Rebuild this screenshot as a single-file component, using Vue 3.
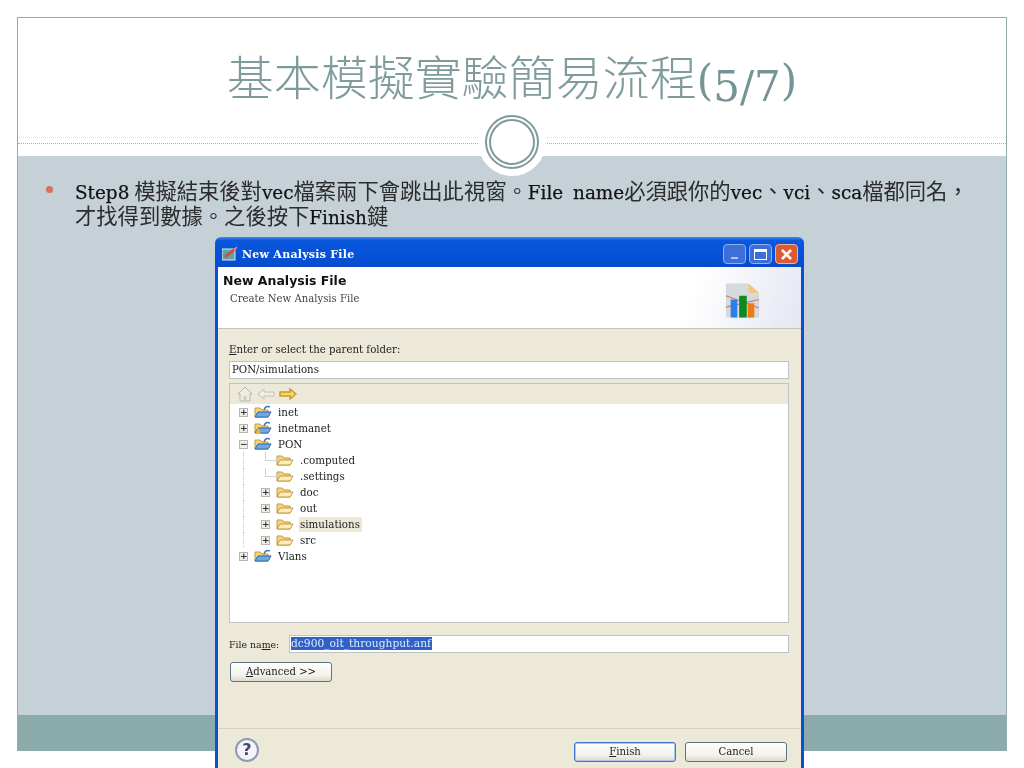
<script setup>
const rows = [
  { label: "inet", depth: 0, toggle: "+", icon: "project" },
  { label: "inetmanet", depth: 0, toggle: "+", icon: "project", warn: true },
  { label: "PON", depth: 0, toggle: "-", icon: "project" },
  { label: ".computed", depth: 1, toggle: "", icon: "folder" },
  { label: ".settings", depth: 1, toggle: "", icon: "folder" },
  { label: "doc", depth: 1, toggle: "+", icon: "folder" },
  { label: "out", depth: 1, toggle: "+", icon: "folder" },
  { label: "simulations", depth: 1, toggle: "+", icon: "folder", selected: true },
  { label: "src", depth: 1, toggle: "+", icon: "folder" },
  { label: "Vlans", depth: 0, toggle: "+", icon: "project" },
];
</script>

<template>
  <div class="page">
    <div class="slide">
      <header class="head">
        <h1 class="title">基本模擬實驗簡易流程<span class="nums">(<span class="digits">5/7</span>)</span></h1>
      </header>
      <div class="rule"></div>
      <div class="halo"><div class="ring"></div></div>
      <main class="body">
        <p class="bullet">
          <span class="lat">Step8</span> 模擬結束後對<span class="lat">vec</span>檔案兩下會跳出此視窗。<span class="lat">File name</span>必須跟你的<span class="lat">vec</span>、<span class="lat">vci</span>、<span class="lat">sca</span>檔都同名，<br />才找得到數據。之後按下<span class="lat">Finish</span>鍵
        </p>
      </main>
      <footer class="foot"></footer>
    </div>

    <section class="dialog">
      <div class="titlebar">
        <svg class="app-icon" width="16" height="14" viewBox="0 0 16 14">
          <rect x="0" y="2" width="13" height="11" fill="#5fa3a8" stroke="#dfe8e8" />
          <path d="M3 10 L13 2" stroke="#e0442c" stroke-width="2.4" />
          <path d="M12 3 L15 0" stroke="#e98a70" stroke-width="1.6" />
        </svg>
        <span class="titlebar-text">New Analysis File</span>
        <div class="win-btns">
          <span class="win-btn"><i class="min"></i></span>
          <span class="win-btn"><i class="max"></i></span>
          <span class="win-btn close">
            <svg width="15" height="15" viewBox="0 0 15 15">
              <path d="M3 3 L12 12 M12 3 L3 12" stroke="#fff" stroke-width="2.6" />
            </svg>
          </span>
        </div>
      </div>

      <div class="frame">
        <div class="banner">
          <div>
            <div class="banner-title">New Analysis File</div>
            <div class="banner-sub">Create New Analysis File</div>
          </div>
          <svg class="chart" width="35" height="37" viewBox="0 0 37 38">
            <path d="M1 1 H25 L36 11 V37 H1 Z" fill="#d5dadb" />
            <path d="M25 1 L36 11 H25 Z" fill="#f2c777" />
            <path d="M1 14 L36 27 M1 26 L36 18" stroke="#c9797c" stroke-width="1.2" />
            <rect x="6" y="18" width="7" height="19" fill="#2a7fe8" />
            <rect x="15" y="14" width="8" height="23" fill="#0f8a1f" />
            <rect x="24" y="22" width="7" height="15" fill="#ef7a12" />
          </svg>
        </div>

        <div class="content">
          <label class="field-label"><u>E</u>nter or select the parent folder:</label>
          <div class="input">PON/simulations</div>

          <div class="tree-box">
            <div class="tree-tools">
              <svg width="16" height="16" viewBox="0 0 16 16">
                <path d="M8 1 L15 8 H13 V15 H3 V8 H1 Z" fill="#efece0" stroke="#b9b6a8" />
                <rect x="6.5" y="10" width="3" height="5" fill="#cfccbd" />
              </svg>
              <svg width="18" height="12" viewBox="0 0 18 12">
                <path d="M1 6 L7 1 V4 H17 V8 H7 V11 Z" fill="#f1eee4" stroke="#c3c1b6" />
              </svg>
              <svg width="18" height="12" viewBox="0 0 18 12">
                <path d="M17 6 L11 1 V4 H1 V8 H11 V11 Z" fill="#f7d765" stroke="#c79a2a" stroke-width="1.4" />
              </svg>
            </div>

            <ul class="tree">
              <li
                v-for="row in rows"
                :key="row.label"
                class="row"
                :class="['depth-' + row.depth, { leaf: !row.toggle }]"
              >
                <span class="toggle" :class="{ empty: !row.toggle }">{{ row.toggle === "-" ? "−" : row.toggle }}</span>
                <svg class="node-icon" width="18" height="14" viewBox="0 0 18 14">
                  <path d="M1 3 H6 L8 5 H14 V12 H1 Z" fill="#f5d27e" stroke="#c39a45" />
                  <path d="M1 12 L4 7 H17 L14 12 Z" fill="#fdeeb8" stroke="#c39a45" />
                  <template v-if="row.icon === 'project'">
                    <path d="M1 12 L4 7 H17 L14 12 Z" fill="#6fa8e0" stroke="#356fb5" />
                    <path d="M10 5 C11 1 14 1 16 2" fill="none" stroke="#3f7fc4" stroke-width="1.6" />
                  </template>
                  <path v-if="row.warn" d="M1 13 L4 6 L7 13 Z" fill="#f0b429" />
                </svg>
                <span class="node-label" :class="{ selected: row.selected }">{{ row.label }}</span>
              </li>
            </ul>
          </div>

          <div class="file-row">
            <label class="file-label">File na<u>m</u>e:</label>
            <div class="input file-input"><span class="picked">dc900_olt_throughput.anf</span></div>
          </div>

          <button class="btn advanced"><u>A</u>dvanced &gt;&gt;</button>
        </div>

        <div class="actions">
          <span class="help">?</span>
          <button class="btn primary"><u>F</u>inish</button>
          <button class="btn">Cancel</button>
        </div>
      </div>
    </section>
  </div>
</template>

<style scoped>
.page {
  position: relative;
  width: 1024px;
  height: 768px;
  overflow: hidden;
  background: #fff;
}

.slide {
  position: relative;
  margin: 17px 0 0 17px;
  width: 990px;
  height: 734px;
  display: flex;
  flex-direction: column;
  box-sizing: border-box;
  border: 1px solid #8faaa9;
  border-bottom: 0;
  filter: blur(0.3px);
}

.head {
  height: 138px;
  background: #fff;
  display: flex;
  justify-content: center;
}

.title {
  margin: 22px 0 0;
  font: 300 47px/70px "Noto Sans CJK TC", sans-serif;
  color: #7f9c9c;
  white-space: nowrap;
}

.nums {
  font-family: "DejaVu Serif", serif;
  font-size: 42px;
  color: #769494;
}

.digits {
  vertical-align: -6px;
}

.rule {
  position: absolute;
  left: 0;
  right: 0;
  top: 119px;
  height: 5px;
  border-top: 1px dotted #dfe6e6;
  border-bottom: 1px dotted #9db2b2;
}

.halo {
  position: absolute;
  left: 460px;
  top: 90px;
  width: 68px;
  height: 68px;
  border-radius: 50%;
  background: #fff;
  display: flex;
  align-items: center;
  justify-content: center;
}

.ring {
  width: 42px;
  height: 42px;
  border-radius: 50%;
  border: 2px solid #7f9a9a;
  outline: 2px solid #7f9a9a;
  outline-offset: 2px;
}

.body {
  flex: 1;
  background: #c5d1d7;
  padding: 21px 30px 0 57px;
}

.bullet {
  position: relative;
  margin: 0;
  font: 21.3px/25px "Noto Sans CJK TC", sans-serif;
  color: #2c2c2c;
  white-space: nowrap;
}

.lat {
  font-family: "DejaVu Serif", serif;
  font-size: 18.4px;
  line-height: 1;
  word-spacing: 4px;
  color: #111;
  -webkit-text-stroke: 0.25px #111;
}

.bullet::before {
  content: "";
  position: absolute;
  left: -29px;
  top: 9px;
  width: 7px;
  height: 7px;
  border-radius: 50%;
  background: #d8705c;
}

.foot {
  height: 36px;
  background: #8aabaa;
}

.dialog {
  position: absolute;
  left: 215px;
  top: 237px;
  width: 589px;
  height: 531px;
  display: flex;
  flex-direction: column;
  filter: blur(0.5px);
  font-family: "DejaVu Serif", serif;
  color: #222;
}

.titlebar {
  height: 30px;
  flex: none;
  box-sizing: border-box;
  display: flex;
  align-items: center;
  padding: 4px 6px 0 7px;
  border-radius: 6px 6px 0 0;
  background: linear-gradient(#3b8bf0, #0a57dc 12%, #0451d8 70%, #0a49c8);
}

.app-icon {
  margin-right: 4px;
}

.titlebar-text {
  font-size: 11px;
  font-weight: 700;
  color: #fff;
  letter-spacing: 0.25px;
}

.win-btns {
  margin-left: auto;
  display: flex;
  gap: 3px;
}

.win-btn {
  width: 23px;
  height: 20px;
  box-sizing: border-box;
  border: 1px solid #8db0ee;
  border-radius: 4px;
  background: #3e6fd8;
  display: flex;
  align-items: center;
  justify-content: center;
}

.win-btn .min {
  width: 7px;
  height: 2px;
  margin-top: 8px;
  background: #b7c8ef;
}

.win-btn .max {
  width: 13px;
  height: 11px;
  box-sizing: border-box;
  border: 1.5px solid #fff;
  border-top-width: 3px;
}

.win-btn.close {
  background: #dc5a32;
  border-color: #eeb09b;
}

.frame {
  flex: 1;
  display: flex;
  flex-direction: column;
  border-left: 3px solid #0b4fd6;
  border-right: 3px solid #0b4fd6;
  background: #ece9d8;
}

.banner {
  height: 62px;
  flex: none;
  box-sizing: border-box;
  padding: 6px 41px 0 5px;
  display: flex;
  justify-content: space-between;
  background: linear-gradient(110deg, #fff 80%, #e4e6f2 100%);
  border-bottom: 1px solid #c4c3b8;
}

.banner-title {
  font: 700 12.5px/15px "DejaVu Sans", sans-serif;
  color: #111;
}

.banner-sub {
  margin: 4px 0 0 7px;
  font-size: 10.1px;
  line-height: 13px;
  color: #444;
}

.chart {
  margin-top: 9px;
}

.content {
  flex: 1;
  padding: 14px 12px 0 11px;
  display: flex;
  flex-direction: column;
  align-items: stretch;
}

.field-label {
  font-size: 10.2px;
  line-height: 14px;
}

.input {
  height: 18px;
  margin-top: 4px;
  box-sizing: border-box;
  padding: 0 2px;
  background: #fff;
  border: 1px solid #bfc3c4;
  font-size: 10.2px;
  line-height: 16px;
}

.tree-box {
  height: 240px;
  margin-top: 4px;
  box-sizing: border-box;
  border: 1px solid #bfc3c4;
  background: #fff;
}

.tree-tools {
  height: 20px;
  padding-left: 7px;
  display: flex;
  align-items: center;
  gap: 4px;
  background: #ece9d8;
}

.tree {
  list-style: none;
  margin: 0;
  padding: 0;
}

.row {
  position: relative;
  height: 16px;
  display: flex;
  align-items: center;
  padding-left: 9px;
  font-size: 10.3px;
}

.row.depth-1 {
  padding-left: 31px;
}

/* tree guide lines */
.row.depth-1::before {
  content: "";
  position: absolute;
  left: 13px;
  top: 0;
  bottom: 0;
  border-left: 1px dotted #c9c9c2;
}

.row.leaf::after {
  content: "";
  position: absolute;
  left: 35px;
  top: 0;
  width: 13px;
  height: 8px;
  border-left: 1px solid #d4d4cc;
  border-bottom: 1px solid #d4d4cc;
}

.toggle {
  width: 9px;
  height: 9px;
  flex: none;
  box-sizing: border-box;
  border: 1px solid #b7b7ae;
  background: #efefe8;
  font: 700 9px/7px "DejaVu Sans", sans-serif;
  text-align: center;
  color: #333;
  margin-right: 6px;
}

.toggle.empty {
  visibility: hidden;
}

.node-icon {
  margin-right: 5px;
  flex: none;
}

.node-label {
  padding: 0 1px;
  line-height: 15px;
}

.node-label.selected {
  padding-right: 2px;
  background: #ece9d8;
}

.file-row {
  display: flex;
  align-items: center;
  margin-top: 13px;
}

.file-label {
  width: 60px;
  flex: none;
  font-size: 9.4px;
}

.file-input {
  flex: 1;
  margin-top: -1px;
  padding: 0 0 0 1px;
  font-size: 10.7px;
}

.picked {
  display: inline-block;
  background: #2f62c4;
  color: #dfe8ff;
  line-height: 13px;
  padding-right: 1px;
}

.btn {
  width: 102px;
  height: 20px;
  box-sizing: border-box;
  padding: 0;
  border: 1px solid #5f7481;
  border-radius: 3px;
  background: linear-gradient(#fff, #f2f1ea 70%, #dcd9cc);
  font: 10.1px/16px "DejaVu Serif", serif;
  color: #222;
}

.btn.advanced {
  align-self: flex-start;
  margin-top: 9px;
  margin-left: 1px;
}

.btn.primary {
  border-color: #3f75c4;
  box-shadow: inset 0 0 0 1px #a9c8ef;
  margin-left: auto;
}

.actions {
  height: 40px;
  flex: none;
  box-sizing: border-box;
  padding: 13px 14px 0 17px;
  display: flex;
  align-items: flex-start;
  gap: 9px;
  border-top: 1px solid #d6d2bf;
}

.help {
  width: 24px;
  height: 24px;
  margin-top: -4px;
  box-sizing: border-box;
  border: 2px solid #8e99b8;
  border-radius: 50%;
  background: #f4f4f8;
  text-align: center;
  font: 700 16px/20px "DejaVu Sans", sans-serif;
  color: #3e4a70;
}
</style>

<style>
html, body {
  margin: 0;
  background: #fff;
}
</style>
